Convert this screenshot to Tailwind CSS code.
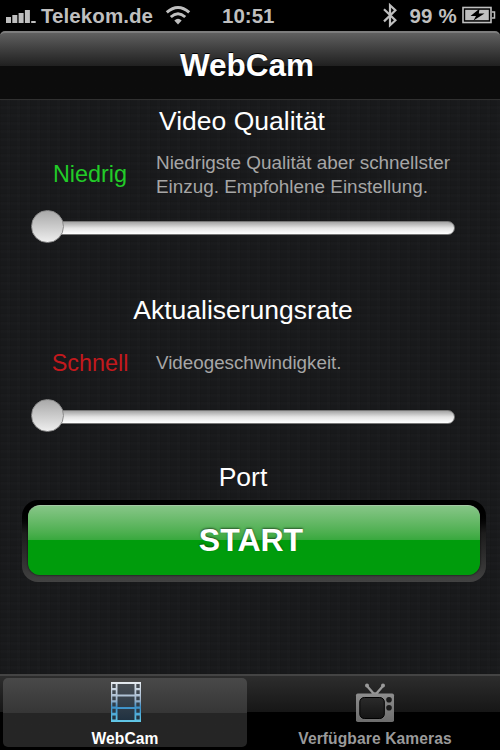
<!DOCTYPE html>
<html lang="de">
<head>
    <meta charset="UTF-8" />
    <meta name="viewport" content="width=device-width, initial-scale=1.0" />
    <title>WebCam</title>
    <script src="https://cdn.jsdelivr.net/npm/@tailwindcss/browser@4"></script>
</head>
<body class="bg-black">
<div class="w-[500px] h-[750px] overflow-hidden flex flex-col bg-black text-white font-['Liberation_Sans',Arial,sans-serif]">

    <!-- Status bar -->
    <div class="h-[31px] shrink-0 relative flex items-center justify-between pl-[6px] pr-[4px] text-[20.5px] leading-[31px] font-bold text-[#bfbfbf]">
        <div class="flex items-center">
            <svg class="w-[30px] h-[31px]" viewBox="0 0 30 31" fill="#bfbfbf">
                <rect x="0" y="17" width="5" height="6" />
                <rect x="6.3" y="15" width="5" height="8" />
                <rect x="12.6" y="13" width="5" height="10" />
                <rect x="18.9" y="10" width="5" height="13" />
                <rect x="25.2" y="21" width="4.5" height="2" />
            </svg>
            <span class="ml-[5px] tracking-[0.08px]">Telekom.de</span>
            <svg class="w-[26px] h-[31px] ml-[12px]" viewBox="0 0 26 31" fill="none" stroke="#bfbfbf" stroke-width="3">
                <path d="M1.8 12.4 Q13 2.5 24.2 12.4" />
                <path d="M5.8 17 Q13 10.6 20.2 17" />
                <path d="M9.3 20.6 Q13 17 16.7 20.6 L13 24.4 Z" fill="#bfbfbf" stroke="none" />
            </svg>
        </div>
        <span class="absolute left-[222px] top-0">10:51</span>
        <div class="flex items-center">
            <svg class="w-[14px] h-[31px]" viewBox="0 0 14 31" fill="none" stroke="#bfbfbf" stroke-width="2.2">
                <path d="M1 9.2 L12.4 20.3 L7 25.2 V5.3 L12.4 10.2 L1 21.4" />
            </svg>
            <span class="ml-[12px] tracking-[0.2px]">99 %</span>
            <svg class="w-[34px] h-[31px] ml-[5px]" viewBox="0 0 34 31">
                <rect x="1" y="7.5" width="28" height="15" fill="none" stroke="#bfbfbf" stroke-width="1.6" />
                <rect x="3.2" y="9.8" width="23.6" height="10.4" fill="#bfbfbf" />
                <path d="M29.8 12 H32.5 V18 H29.8" fill="none" stroke="#bfbfbf" stroke-width="1.5" />
                <path d="M17.5 8.7 L8.5 16 H14 L11.5 20.5 L22.5 13.6 H16.8 Z" fill="#000" />
            </svg>
        </div>
    </div>

    <!-- Navigation bar -->
    <div class="h-[68px] shrink-0 rounded-t-[5px] border-t-2 border-t-[#7d7d7d] bg-linear-to-b from-[#606060] from-0% via-[#202020] via-50% to-[#0c0c0c] to-50%">
        <h1 class="h-[66px] text-center text-[31.5px] leading-[65px] pr-[6px] font-bold text-shadow-[0_-1px_0_#000]">WebCam</h1>
    </div>

    <!-- Settings -->
    <main class="flex-1 border-t border-[#303030] bg-[#18191b] bg-[repeating-linear-gradient(90deg,rgba(0,0,0,.06)_0_1px,transparent_1px_7px,rgba(255,255,255,.008)_7px_10px),repeating-linear-gradient(0deg,rgba(0,0,0,.06)_0_1px,transparent_1px_5px,rgba(255,255,255,.008)_5px_8px)]">
        <section class="h-[189px] pt-[6px]">
            <h2 class="h-[30px] pr-[16px] text-center text-[26.5px] leading-[30px]">Video Qualität</h2>
            <div class="mt-[14px] h-[47px] flex items-center">
                <span class="w-[132px] ml-[24px] text-center text-[23.4px] leading-[30px] text-[#22cc28]">Niedrig</span>
                <p class="pt-[2px] text-[18.9px] leading-[23.4px] text-[#a6a6a6] whitespace-nowrap">Niedrigste Qualität aber schnellster<br />Einzug. Empfohlene Einstellung.</p>
            </div>
            <div class="mt-[13px] ml-[31px] w-[424px] h-[33px] flex items-center">
                <div class="w-[33px] h-[33px] shrink-0 z-10 rounded-full border border-[#8c8c8c] bg-linear-to-b from-[#a9a9a9] to-[#eeeeee]"></div>
                <div class="flex-1 -ml-[10px] mt-[3px] h-[14px] rounded-full border border-[#777] bg-linear-to-b from-[#a4a4a4] via-[#e4e4e4] via-50% to-white"></div>
            </div>
        </section>

        <section class="h-[166px] pt-[6px]">
            <h2 class="h-[30px] pr-[14px] text-center text-[26.5px] leading-[30px]">Aktualiserungsrate</h2>
            <div class="mt-[14px] h-[47px] flex items-center">
                <span class="w-[132px] ml-[24px] text-center text-[23.4px] leading-[30px] text-[#c3191d]">Schnell</span>
                <p class="text-[18.8px] leading-[23.4px] text-[#a6a6a6] whitespace-nowrap">Videogeschwindigkeit.</p>
            </div>
            <div class="mt-[13px] ml-[31px] w-[424px] h-[33px] flex items-center">
                <div class="w-[33px] h-[33px] shrink-0 z-10 rounded-full border border-[#8c8c8c] bg-linear-to-b from-[#a9a9a9] to-[#eeeeee]"></div>
                <div class="flex-1 -ml-[10px] mt-[3px] h-[14px] rounded-full border border-[#777] bg-linear-to-b from-[#a4a4a4] via-[#e4e4e4] via-50% to-white"></div>
            </div>
        </section>

        <section class="pt-[7px]">
            <h2 class="h-[30px] pr-[14px] text-center text-[26.5px] leading-[30px]">Port</h2>
            <div class="mt-[8px] ml-[22px] w-[464px] h-[82px] pt-[5px] px-[6px] rounded-[16px] bg-linear-to-b from-black from-10% via-[#1c1c1c] via-40% to-[#424242]">
                <button class="block w-full h-[70px] rounded-[12px] border-t border-[#a5c9a5] bg-linear-to-b from-[#86c687] from-0% via-[#36a83c] via-50% to-[#009c0c] to-50% shadow-[0_0_2px_#000] text-[32px] leading-[66px] pb-[1px] pr-[6px] font-bold text-shadow-[0_-1px_2px_rgba(0,0,0,.5)]">START</button>
            </div>
        </section>
    </main>

    <!-- Tab bar -->
    <nav class="h-[76px] shrink-0 flex border-t-2 border-[#444] bg-linear-to-b from-[#2d2d2d] from-0% via-[#161616] via-49% to-black to-49% text-[15.6px] leading-[18px] font-bold">
        <div class="w-[250px] pt-[2px] pl-[3px]">
            <a class="w-[244px] h-[69px] rounded-[5px] flex flex-col items-center bg-linear-to-b from-[#494949] from-0% via-[#363636] via-50% to-[#252525] to-50%">
                <svg class="w-[32px] h-[42px] mt-[3px] ml-[2px] shrink-0" viewBox="0 0 32 42">
                    <defs>
                        <linearGradient id="film" x1="0" y1="0" x2="0" y2="1">
                            <stop offset="0" stop-color="#e6ebf0" />
                            <stop offset=".45" stop-color="#9db4cc" />
                            <stop offset=".62" stop-color="#3c8fc8" />
                            <stop offset="1" stop-color="#63c9e8" />
                        </linearGradient>
                        <linearGradient id="frame" x1="0" y1="0" x2="0" y2="1">
                            <stop offset="0" stop-color="#4a4f55" />
                            <stop offset="1" stop-color="#1e3040" />
                        </linearGradient>
                    </defs>
                    <rect x="1" y="1" width="30" height="40" fill="url(#frame)" />
                    <path fill="url(#film)" fill-rule="evenodd" d="M1 1H31V41H1Z M7.5 3V13.5H24.5V3Z M7.5 15.5V26H24.5V15.5Z M7.5 28V39H24.5V28Z
                        M2.3 3H5.7V6.9H2.3Z M2.3 9.2H5.7V13.1H2.3Z M2.3 15.4H5.7V19.3H2.3Z M2.3 21.6H5.7V25.5H2.3Z M2.3 27.8H5.7V31.7H2.3Z M2.3 34.6H5.7V38.5H2.3Z
                        M26.3 3H29.7V6.9H26.3Z M26.3 9.2H29.7V13.1H26.3Z M26.3 15.4H29.7V19.3H26.3Z M26.3 21.6H29.7V25.5H26.3Z M26.3 27.8H29.7V31.7H26.3Z M26.3 34.6H29.7V38.5H26.3Z" />
                </svg>
                <span class="mt-[7px] text-white tracking-[0.1px]">WebCam</span>
            </a>
        </div>
        <a class="w-[250px] flex flex-col items-center text-[#9a9a9a]">
            <svg class="w-[40px] h-[42px] mt-[6px]" viewBox="0 0 40 42">
                <defs>
                    <linearGradient id="tv" x1="0" y1="0" x2="0" y2="1">
                        <stop offset="0" stop-color="#8e8e8e" />
                        <stop offset="1" stop-color="#6c6c6c" />
                    </linearGradient>
                    <linearGradient id="screen" x1="0" y1="0" x2="0" y2="1">
                        <stop offset="0" stop-color="#2b2b2b" />
                        <stop offset="1" stop-color="#141414" />
                    </linearGradient>
                </defs>
                <path d="M12 4 L19 12 M28 4 L21 12" fill="none" stroke="#999" stroke-width="2.4" />
                <circle cx="12" cy="3.5" r="2" fill="#999" />
                <circle cx="28" cy="3.5" r="2" fill="#999" />
                <path d="M16 12 Q20 8.5 24 12Z" fill="#999" />
                <rect x="1" y="11.5" width="38" height="28.5" rx="1.8" fill="url(#tv)" />
                <rect x="4.8" y="15.5" width="24.5" height="21" rx="4.5" fill="url(#screen)" stroke="#000" stroke-width="1" />
                <circle cx="34" cy="17.7" r="2.8" fill="#1b1b1b" />
                <circle cx="34" cy="25.7" r="2.8" fill="#1b1b1b" />
            </svg>
            <span class="mt-[6px] tracking-[0.1px]">Verfügbare Kameras</span>
        </a>
    </nav>
</div>
</body>
</html>
